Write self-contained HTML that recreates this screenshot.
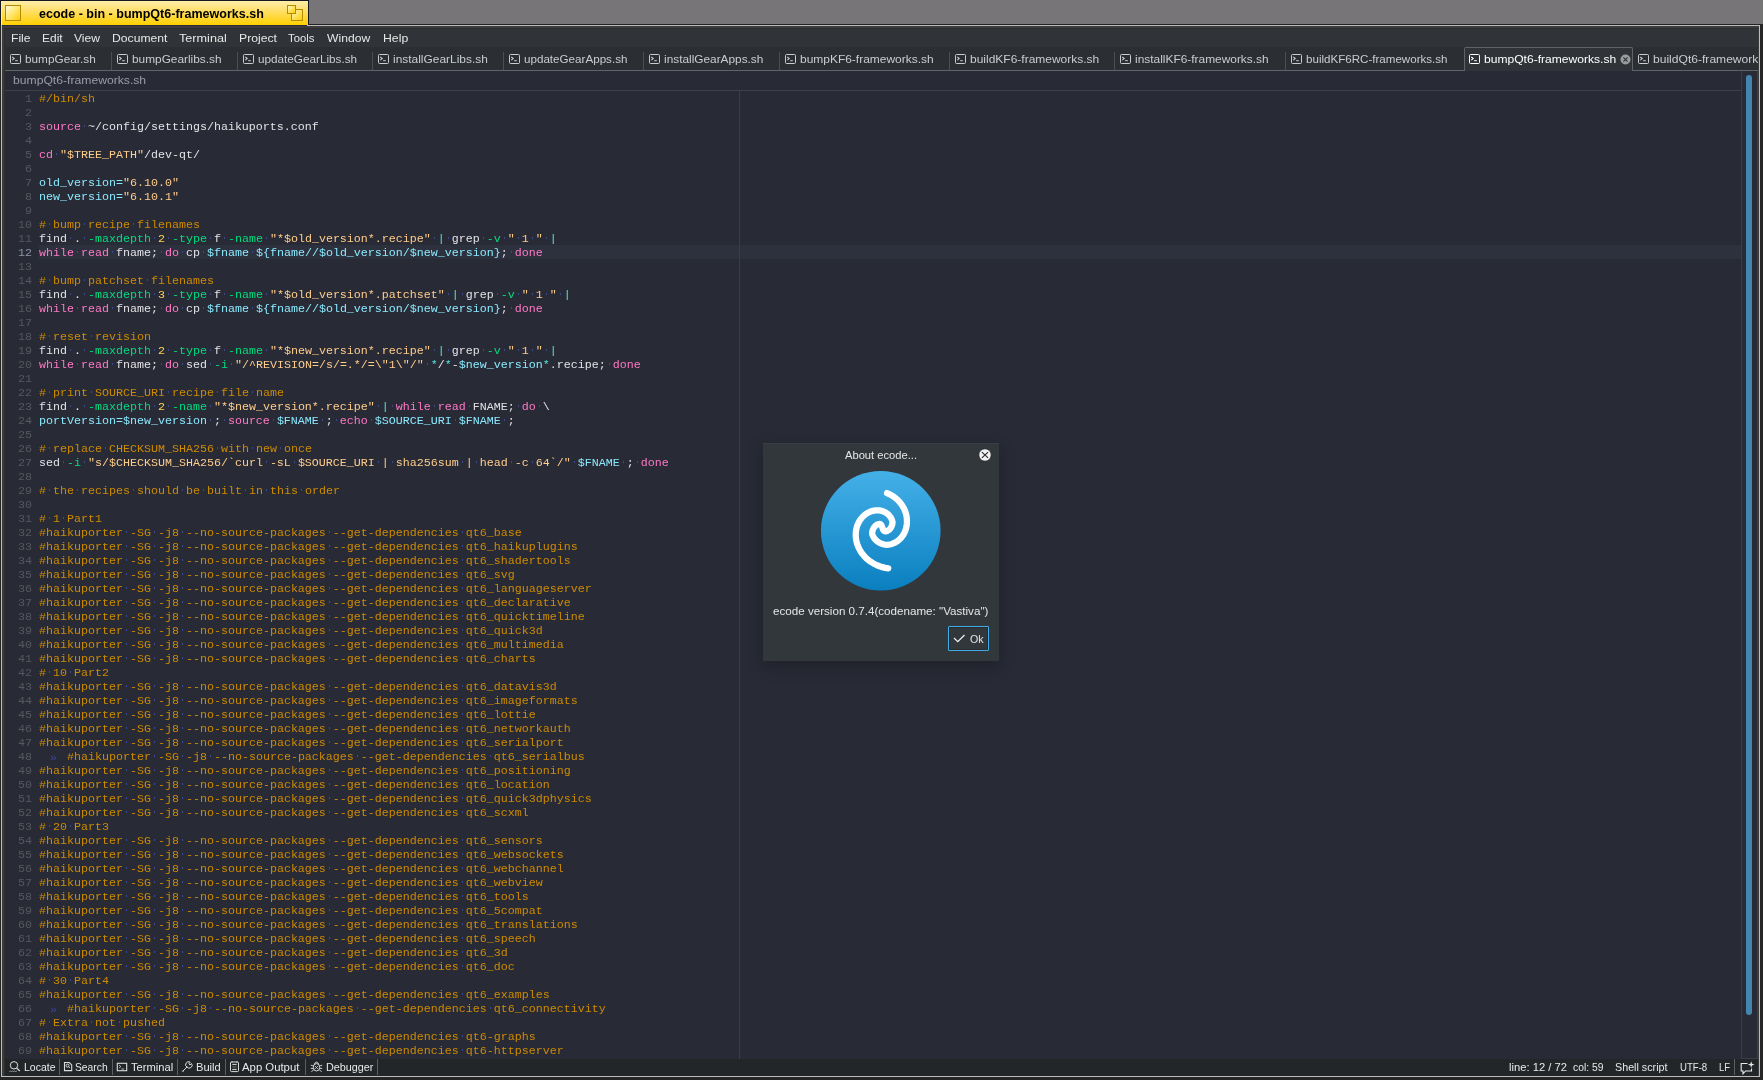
<!DOCTYPE html><html><head><meta charset="utf-8"><style>
*{margin:0;padding:0;box-sizing:border-box}
html,body{width:1763px;height:1080px;overflow:hidden;background:#777578;font-family:"Liberation Sans", sans-serif}
.abs{position:absolute}
.lb{position:absolute;white-space:pre;line-height:1;transform-origin:0 0}
#tabwrap{position:absolute;left:0;top:0;width:1758px;height:1080px;overflow:hidden;pointer-events:none;will-change:transform}
.code{position:absolute;left:5px;top:91px;width:1736px;height:968px;overflow:hidden;will-change:transform}
.ln{position:absolute;left:0;height:14px;width:1736px;font-family:"Liberation Mono", monospace;font-size:11.667px;line-height:16px;white-space:pre;color:#e1e1e6}
.ln u{position:absolute;right:1709px;top:0;text-decoration:none;color:#56585f}
.ln.cur u{color:#8f93a8}
.ln p{position:absolute;left:34px;top:0}
.ln i{font-style:normal;background:linear-gradient(#3b4892,#3b4892) no-repeat 3px 5px/1px 2px}
.ln b.tb{font-weight:normal;position:relative}.ln b.tb s{text-decoration:none;position:absolute;left:11px;top:0;color:#3b4892}
.c{color:#cd8b00}.k{color:#ff79c6}.v{color:#8be9fd}.n{color:#ffd24a}.s{color:#ffcd8b}.f{color:#00dc7f}.p{color:#52e4d9}
</style></head><body><div class="abs" style="left:0;top:0;width:309px;height:25px;background:#15181f"></div><div class="abs" style="left:1px;top:1px;width:307px;height:24px;background:linear-gradient(#ffeeaa,#ffe27a 30%,#ffd000);box-shadow:inset 1px 0 0 #fff3a0"></div><div class="abs" style="left:5px;top:5px;width:16px;height:16px;border:1px solid #b58c00;background:linear-gradient(135deg,#fffbe0,#ffd000)"></div><div class="abs" style="left:291px;top:9px;width:12px;height:12px;border:1px solid #b58c00;background:linear-gradient(135deg,#fff6c0,#ffd000)"></div><div class="abs" style="left:287px;top:5px;width:9px;height:9px;border:1px solid #b58c00;background:linear-gradient(135deg,#fff6c0,#ffd000)"></div><div class="abs" style="left:308px;top:24px;width:1455px;height:1px;background:#222222"></div><div class="abs" style="left:0;top:25px;width:1763px;height:1055px;background:#262626"></div><div class="abs" style="left:1px;top:25px;width:1759px;height:1052px;background:#bcbcbc"></div><div class="abs" style="left:2px;top:26px;width:1757px;height:1050px;background:#3c3c3c"></div><div class="abs" style="left:2px;top:25px;width:305px;height:1px;background:#2a2c3a"></div><div class="abs" style="left:4px;top:28px;width:1754px;height:1048px;background:#2e2e2e"></div><div class="abs" style="left:5px;top:29px;width:1753px;height:18px;background:#303438"></div><div class="abs" style="left:5px;top:47px;width:1753px;height:23px;background:#2b2f33"></div><div class="abs" style="left:5px;top:70px;width:1753px;height:1px;background:#5f6469"></div><div class="abs" style="left:111px;top:52px;width:1px;height:18px;background:#4b4f53"></div><div class="abs" style="left:237px;top:52px;width:1px;height:18px;background:#4b4f53"></div><div class="abs" style="left:372px;top:52px;width:1px;height:18px;background:#4b4f53"></div><div class="abs" style="left:503px;top:52px;width:1px;height:18px;background:#4b4f53"></div><div class="abs" style="left:643px;top:52px;width:1px;height:18px;background:#4b4f53"></div><div class="abs" style="left:779px;top:52px;width:1px;height:18px;background:#4b4f53"></div><div class="abs" style="left:949px;top:52px;width:1px;height:18px;background:#4b4f53"></div><div class="abs" style="left:1114px;top:52px;width:1px;height:18px;background:#4b4f53"></div><div class="abs" style="left:1285px;top:52px;width:1px;height:18px;background:#4b4f53"></div><div class="abs" style="left:1464px;top:47px;width:169px;height:24px;background:#303438;border:1px solid #5f6469;border-bottom:none;border-radius:2px 2px 0 0"></div><svg class="abs" style="left:10px;top:54px" width="11" height="10" viewBox="0 0 11 10"><rect x="0.5" y="0.5" width="10" height="9" rx="1" fill="none" stroke="#c9cdd1" stroke-width="1"/><path d="M2.3 3 L4.2 4.6 L2.3 6.2" fill="none" stroke="#c9cdd1" stroke-width="1.1"/><path d="M5.2 6.7 H7.8" stroke="#c9cdd1" stroke-width="1"/></svg><svg class="abs" style="left:117px;top:54px" width="11" height="10" viewBox="0 0 11 10"><rect x="0.5" y="0.5" width="10" height="9" rx="1" fill="none" stroke="#c9cdd1" stroke-width="1"/><path d="M2.3 3 L4.2 4.6 L2.3 6.2" fill="none" stroke="#c9cdd1" stroke-width="1.1"/><path d="M5.2 6.7 H7.8" stroke="#c9cdd1" stroke-width="1"/></svg><svg class="abs" style="left:243px;top:54px" width="11" height="10" viewBox="0 0 11 10"><rect x="0.5" y="0.5" width="10" height="9" rx="1" fill="none" stroke="#c9cdd1" stroke-width="1"/><path d="M2.3 3 L4.2 4.6 L2.3 6.2" fill="none" stroke="#c9cdd1" stroke-width="1.1"/><path d="M5.2 6.7 H7.8" stroke="#c9cdd1" stroke-width="1"/></svg><svg class="abs" style="left:378px;top:54px" width="11" height="10" viewBox="0 0 11 10"><rect x="0.5" y="0.5" width="10" height="9" rx="1" fill="none" stroke="#c9cdd1" stroke-width="1"/><path d="M2.3 3 L4.2 4.6 L2.3 6.2" fill="none" stroke="#c9cdd1" stroke-width="1.1"/><path d="M5.2 6.7 H7.8" stroke="#c9cdd1" stroke-width="1"/></svg><svg class="abs" style="left:509px;top:54px" width="11" height="10" viewBox="0 0 11 10"><rect x="0.5" y="0.5" width="10" height="9" rx="1" fill="none" stroke="#c9cdd1" stroke-width="1"/><path d="M2.3 3 L4.2 4.6 L2.3 6.2" fill="none" stroke="#c9cdd1" stroke-width="1.1"/><path d="M5.2 6.7 H7.8" stroke="#c9cdd1" stroke-width="1"/></svg><svg class="abs" style="left:649px;top:54px" width="11" height="10" viewBox="0 0 11 10"><rect x="0.5" y="0.5" width="10" height="9" rx="1" fill="none" stroke="#c9cdd1" stroke-width="1"/><path d="M2.3 3 L4.2 4.6 L2.3 6.2" fill="none" stroke="#c9cdd1" stroke-width="1.1"/><path d="M5.2 6.7 H7.8" stroke="#c9cdd1" stroke-width="1"/></svg><svg class="abs" style="left:785px;top:54px" width="11" height="10" viewBox="0 0 11 10"><rect x="0.5" y="0.5" width="10" height="9" rx="1" fill="none" stroke="#c9cdd1" stroke-width="1"/><path d="M2.3 3 L4.2 4.6 L2.3 6.2" fill="none" stroke="#c9cdd1" stroke-width="1.1"/><path d="M5.2 6.7 H7.8" stroke="#c9cdd1" stroke-width="1"/></svg><svg class="abs" style="left:955px;top:54px" width="11" height="10" viewBox="0 0 11 10"><rect x="0.5" y="0.5" width="10" height="9" rx="1" fill="none" stroke="#c9cdd1" stroke-width="1"/><path d="M2.3 3 L4.2 4.6 L2.3 6.2" fill="none" stroke="#c9cdd1" stroke-width="1.1"/><path d="M5.2 6.7 H7.8" stroke="#c9cdd1" stroke-width="1"/></svg><svg class="abs" style="left:1120px;top:54px" width="11" height="10" viewBox="0 0 11 10"><rect x="0.5" y="0.5" width="10" height="9" rx="1" fill="none" stroke="#c9cdd1" stroke-width="1"/><path d="M2.3 3 L4.2 4.6 L2.3 6.2" fill="none" stroke="#c9cdd1" stroke-width="1.1"/><path d="M5.2 6.7 H7.8" stroke="#c9cdd1" stroke-width="1"/></svg><svg class="abs" style="left:1291px;top:54px" width="11" height="10" viewBox="0 0 11 10"><rect x="0.5" y="0.5" width="10" height="9" rx="1" fill="none" stroke="#c9cdd1" stroke-width="1"/><path d="M2.3 3 L4.2 4.6 L2.3 6.2" fill="none" stroke="#c9cdd1" stroke-width="1.1"/><path d="M5.2 6.7 H7.8" stroke="#c9cdd1" stroke-width="1"/></svg><svg class="abs" style="left:1469px;top:54px" width="11" height="10" viewBox="0 0 11 10"><rect x="0.5" y="0.5" width="10" height="9" rx="1" fill="none" stroke="#ffffff" stroke-width="1"/><path d="M2.3 3 L4.2 4.6 L2.3 6.2" fill="none" stroke="#ffffff" stroke-width="1.1"/><path d="M5.2 6.7 H7.8" stroke="#ffffff" stroke-width="1"/></svg><svg class="abs" style="left:1638px;top:54px" width="11" height="10" viewBox="0 0 11 10"><rect x="0.5" y="0.5" width="10" height="9" rx="1" fill="none" stroke="#c9cdd1" stroke-width="1"/><path d="M2.3 3 L4.2 4.6 L2.3 6.2" fill="none" stroke="#c9cdd1" stroke-width="1.1"/><path d="M5.2 6.7 H7.8" stroke="#c9cdd1" stroke-width="1"/></svg><svg class="abs" style="left:1620px;top:54px" width="11" height="11" viewBox="0 0 11 11"><circle cx="5.5" cy="5.5" r="5" fill="#9a9c9e"/><path d="M3.4 3.4 L7.6 7.6 M7.6 3.4 L3.4 7.6" stroke="#2e3236" stroke-width="1.1"/></svg><div class="abs" style="left:5px;top:71px;width:1736px;height:19px;background:#282a36"></div><div class="abs" style="left:5px;top:90px;width:1736px;height:1px;background:#3e414c"></div><div class="abs" style="left:5px;top:91px;width:1736px;height:968px;background:#282a36"></div><div class="abs" style="left:1741px;top:71px;width:17px;height:988px;background:#282a36;border-left:1px solid #3a3c46;border-bottom:1px solid #3a3c46;border-right:1px solid #3a3c46"></div><div class="abs" style="left:1746px;top:75px;width:6px;height:940px;background:#4285ae;border-radius:3px"></div><div class="code"><div style="position:absolute;left:34px;top:154px;width:1702px;height:14px;background:#2d303d"></div><div style="position:absolute;left:734px;top:0;width:1px;height:968px;background:#3a3c48"></div><div class="ln" style="top:0px"><u>1</u><p><span class="c">#/bin/sh</span></p></div><div class="ln" style="top:14px"><u>2</u><p></p></div><div class="ln" style="top:28px"><u>3</u><p><span class="k">source</span><i> </i>~/config/settings/haikuports.conf</p></div><div class="ln" style="top:42px"><u>4</u><p></p></div><div class="ln" style="top:56px"><u>5</u><p><span class="k">cd</span><i> </i><span class="s">&quot;$TREE_PATH&quot;</span>/dev-qt/</p></div><div class="ln" style="top:70px"><u>6</u><p></p></div><div class="ln" style="top:84px"><u>7</u><p><span class="v">old_version=</span><span class="s">&quot;6.10.0&quot;</span></p></div><div class="ln" style="top:98px"><u>8</u><p><span class="v">new_version=</span><span class="s">&quot;6.10.1&quot;</span></p></div><div class="ln" style="top:112px"><u>9</u><p></p></div><div class="ln" style="top:126px"><u>10</u><p><span class="c">#<i> </i>bump<i> </i>recipe<i> </i>filenames</span></p></div><div class="ln" style="top:140px"><u>11</u><p>find<i> </i>.<i> </i><span class="f">-</span><span class="f">maxdepth</span><i> </i><span class="n">2</span><i> </i><span class="f">-</span><span class="f">type</span><i> </i>f<i> </i><span class="f">-</span><span class="f">name</span><i> </i><span class="s">&quot;*$old_version*.recipe&quot;</span><i> </i><span class="p">|</span><i> </i>grep<i> </i><span class="f">-</span><span class="f">v</span><i> </i><span class="s">&quot;<i> </i>1<i> </i>&quot;</span><i> </i><span class="p">|</span></p></div><div class="ln cur" style="top:154px"><u>12</u><p><span class="k">while</span><i> </i><span class="k">read</span><i> </i>fname;<i> </i><span class="k">do</span><i> </i>cp<i> </i><span class="v">$fname</span><i> </i><span class="v">${fname//$old_version/$new_version}</span>;<i> </i><span class="k">done</span></p></div><div class="ln" style="top:168px"><u>13</u><p></p></div><div class="ln" style="top:182px"><u>14</u><p><span class="c">#<i> </i>bump<i> </i>patchset<i> </i>filenames</span></p></div><div class="ln" style="top:196px"><u>15</u><p>find<i> </i>.<i> </i><span class="f">-</span><span class="f">maxdepth</span><i> </i><span class="n">3</span><i> </i><span class="f">-</span><span class="f">type</span><i> </i>f<i> </i><span class="f">-</span><span class="f">name</span><i> </i><span class="s">&quot;*$old_version*.patchset&quot;</span><i> </i><span class="p">|</span><i> </i>grep<i> </i><span class="f">-</span><span class="f">v</span><i> </i><span class="s">&quot;<i> </i>1<i> </i>&quot;</span><i> </i><span class="p">|</span></p></div><div class="ln" style="top:210px"><u>16</u><p><span class="k">while</span><i> </i><span class="k">read</span><i> </i>fname;<i> </i><span class="k">do</span><i> </i>cp<i> </i><span class="v">$fname</span><i> </i><span class="v">${fname//$old_version/$new_version}</span>;<i> </i><span class="k">done</span></p></div><div class="ln" style="top:224px"><u>17</u><p></p></div><div class="ln" style="top:238px"><u>18</u><p><span class="c">#<i> </i>reset<i> </i>revision</span></p></div><div class="ln" style="top:252px"><u>19</u><p>find<i> </i>.<i> </i><span class="f">-</span><span class="f">maxdepth</span><i> </i><span class="n">2</span><i> </i><span class="f">-</span><span class="f">type</span><i> </i>f<i> </i><span class="f">-</span><span class="f">name</span><i> </i><span class="s">&quot;*$new_version*.recipe&quot;</span><i> </i><span class="p">|</span><i> </i>grep<i> </i><span class="f">-</span><span class="f">v</span><i> </i><span class="s">&quot;<i> </i>1<i> </i>&quot;</span><i> </i><span class="p">|</span></p></div><div class="ln" style="top:266px"><u>20</u><p><span class="k">while</span><i> </i><span class="k">read</span><i> </i>fname;<i> </i><span class="k">do</span><i> </i>sed<i> </i><span class="f">-</span><span class="f">i</span><i> </i><span class="s">&quot;/^REVISION=/s/=.*/=\&quot;1\&quot;/&quot;</span><i> </i><span class="p">*</span>/<span class="p">*</span>-<span class="v">$new_version</span><span class="p">*</span>.recipe;<i> </i><span class="k">done</span></p></div><div class="ln" style="top:280px"><u>21</u><p></p></div><div class="ln" style="top:294px"><u>22</u><p><span class="c">#<i> </i>print<i> </i>SOURCE_URI<i> </i>recipe<i> </i>file<i> </i>name</span></p></div><div class="ln" style="top:308px"><u>23</u><p>find<i> </i>.<i> </i><span class="f">-</span><span class="f">maxdepth</span><i> </i><span class="n">2</span><i> </i><span class="f">-</span><span class="f">name</span><i> </i><span class="s">&quot;*$new_version*.recipe&quot;</span><i> </i><span class="p">|</span><i> </i><span class="k">while</span><i> </i><span class="k">read</span><i> </i>FNAME;<i> </i><span class="k">do</span><i> </i>\</p></div><div class="ln" style="top:322px"><u>24</u><p><span class="v">portVersion=$new_version</span><i> </i>;<i> </i><span class="k">source</span><i> </i><span class="v">$FNAME</span><i> </i>;<i> </i><span class="k">echo</span><i> </i><span class="v">$SOURCE_URI</span><i> </i><span class="v">$FNAME</span><i> </i>;</p></div><div class="ln" style="top:336px"><u>25</u><p></p></div><div class="ln" style="top:350px"><u>26</u><p><span class="c">#<i> </i>replace<i> </i>CHECKSUM_SHA256<i> </i>with<i> </i>new<i> </i>once</span></p></div><div class="ln" style="top:364px"><u>27</u><p>sed<i> </i><span class="f">-</span><span class="f">i</span><i> </i><span class="s">&quot;s/$CHECKSUM_SHA256/`curl<i> </i>-sL<i> </i>$SOURCE_URI<i> </i>|<i> </i>sha256sum<i> </i>|<i> </i>head<i> </i>-c<i> </i>64`/&quot;</span><i> </i><span class="v">$FNAME</span><i> </i>;<i> </i><span class="k">done</span></p></div><div class="ln" style="top:378px"><u>28</u><p></p></div><div class="ln" style="top:392px"><u>29</u><p><span class="c">#<i> </i>the<i> </i>recipes<i> </i>should<i> </i>be<i> </i>built<i> </i>in<i> </i>this<i> </i>order</span></p></div><div class="ln" style="top:406px"><u>30</u><p></p></div><div class="ln" style="top:420px"><u>31</u><p><span class="c">#<i> </i>1<i> </i>Part1</span></p></div><div class="ln" style="top:434px"><u>32</u><p><span class="c">#haikuporter<i> </i>-SG<i> </i>-j8<i> </i>--no-source-packages<i> </i>--get-dependencies<i> </i>qt6_base</span></p></div><div class="ln" style="top:448px"><u>33</u><p><span class="c">#haikuporter<i> </i>-SG<i> </i>-j8<i> </i>--no-source-packages<i> </i>--get-dependencies<i> </i>qt6_haikuplugins</span></p></div><div class="ln" style="top:462px"><u>34</u><p><span class="c">#haikuporter<i> </i>-SG<i> </i>-j8<i> </i>--no-source-packages<i> </i>--get-dependencies<i> </i>qt6_shadertools</span></p></div><div class="ln" style="top:476px"><u>35</u><p><span class="c">#haikuporter<i> </i>-SG<i> </i>-j8<i> </i>--no-source-packages<i> </i>--get-dependencies<i> </i>qt6_svg</span></p></div><div class="ln" style="top:490px"><u>36</u><p><span class="c">#haikuporter<i> </i>-SG<i> </i>-j8<i> </i>--no-source-packages<i> </i>--get-dependencies<i> </i>qt6_languageserver</span></p></div><div class="ln" style="top:504px"><u>37</u><p><span class="c">#haikuporter<i> </i>-SG<i> </i>-j8<i> </i>--no-source-packages<i> </i>--get-dependencies<i> </i>qt6_declarative</span></p></div><div class="ln" style="top:518px"><u>38</u><p><span class="c">#haikuporter<i> </i>-SG<i> </i>-j8<i> </i>--no-source-packages<i> </i>--get-dependencies<i> </i>qt6_quicktimeline</span></p></div><div class="ln" style="top:532px"><u>39</u><p><span class="c">#haikuporter<i> </i>-SG<i> </i>-j8<i> </i>--no-source-packages<i> </i>--get-dependencies<i> </i>qt6_quick3d</span></p></div><div class="ln" style="top:546px"><u>40</u><p><span class="c">#haikuporter<i> </i>-SG<i> </i>-j8<i> </i>--no-source-packages<i> </i>--get-dependencies<i> </i>qt6_multimedia</span></p></div><div class="ln" style="top:560px"><u>41</u><p><span class="c">#haikuporter<i> </i>-SG<i> </i>-j8<i> </i>--no-source-packages<i> </i>--get-dependencies<i> </i>qt6_charts</span></p></div><div class="ln" style="top:574px"><u>42</u><p><span class="c">#<i> </i>10<i> </i>Part2</span></p></div><div class="ln" style="top:588px"><u>43</u><p><span class="c">#haikuporter<i> </i>-SG<i> </i>-j8<i> </i>--no-source-packages<i> </i>--get-dependencies<i> </i>qt6_datavis3d</span></p></div><div class="ln" style="top:602px"><u>44</u><p><span class="c">#haikuporter<i> </i>-SG<i> </i>-j8<i> </i>--no-source-packages<i> </i>--get-dependencies<i> </i>qt6_imageformats</span></p></div><div class="ln" style="top:616px"><u>45</u><p><span class="c">#haikuporter<i> </i>-SG<i> </i>-j8<i> </i>--no-source-packages<i> </i>--get-dependencies<i> </i>qt6_lottie</span></p></div><div class="ln" style="top:630px"><u>46</u><p><span class="c">#haikuporter<i> </i>-SG<i> </i>-j8<i> </i>--no-source-packages<i> </i>--get-dependencies<i> </i>qt6_networkauth</span></p></div><div class="ln" style="top:644px"><u>47</u><p><span class="c">#haikuporter<i> </i>-SG<i> </i>-j8<i> </i>--no-source-packages<i> </i>--get-dependencies<i> </i>qt6_serialport</span></p></div><div class="ln" style="top:658px"><u>48</u><p><b class="tb">    <s>»</s></b><span class="c">#haikuporter<i> </i>-SG<i> </i>-j8<i> </i>--no-source-packages<i> </i>--get-dependencies<i> </i>qt6_serialbus</span></p></div><div class="ln" style="top:672px"><u>49</u><p><span class="c">#haikuporter<i> </i>-SG<i> </i>-j8<i> </i>--no-source-packages<i> </i>--get-dependencies<i> </i>qt6_positioning</span></p></div><div class="ln" style="top:686px"><u>50</u><p><span class="c">#haikuporter<i> </i>-SG<i> </i>-j8<i> </i>--no-source-packages<i> </i>--get-dependencies<i> </i>qt6_location</span></p></div><div class="ln" style="top:700px"><u>51</u><p><span class="c">#haikuporter<i> </i>-SG<i> </i>-j8<i> </i>--no-source-packages<i> </i>--get-dependencies<i> </i>qt6_quick3dphysics</span></p></div><div class="ln" style="top:714px"><u>52</u><p><span class="c">#haikuporter<i> </i>-SG<i> </i>-j8<i> </i>--no-source-packages<i> </i>--get-dependencies<i> </i>qt6_scxml</span></p></div><div class="ln" style="top:728px"><u>53</u><p><span class="c">#<i> </i>20<i> </i>Part3</span></p></div><div class="ln" style="top:742px"><u>54</u><p><span class="c">#haikuporter<i> </i>-SG<i> </i>-j8<i> </i>--no-source-packages<i> </i>--get-dependencies<i> </i>qt6_sensors</span></p></div><div class="ln" style="top:756px"><u>55</u><p><span class="c">#haikuporter<i> </i>-SG<i> </i>-j8<i> </i>--no-source-packages<i> </i>--get-dependencies<i> </i>qt6_websockets</span></p></div><div class="ln" style="top:770px"><u>56</u><p><span class="c">#haikuporter<i> </i>-SG<i> </i>-j8<i> </i>--no-source-packages<i> </i>--get-dependencies<i> </i>qt6_webchannel</span></p></div><div class="ln" style="top:784px"><u>57</u><p><span class="c">#haikuporter<i> </i>-SG<i> </i>-j8<i> </i>--no-source-packages<i> </i>--get-dependencies<i> </i>qt6_webview</span></p></div><div class="ln" style="top:798px"><u>58</u><p><span class="c">#haikuporter<i> </i>-SG<i> </i>-j8<i> </i>--no-source-packages<i> </i>--get-dependencies<i> </i>qt6_tools</span></p></div><div class="ln" style="top:812px"><u>59</u><p><span class="c">#haikuporter<i> </i>-SG<i> </i>-j8<i> </i>--no-source-packages<i> </i>--get-dependencies<i> </i>qt6_5compat</span></p></div><div class="ln" style="top:826px"><u>60</u><p><span class="c">#haikuporter<i> </i>-SG<i> </i>-j8<i> </i>--no-source-packages<i> </i>--get-dependencies<i> </i>qt6_translations</span></p></div><div class="ln" style="top:840px"><u>61</u><p><span class="c">#haikuporter<i> </i>-SG<i> </i>-j8<i> </i>--no-source-packages<i> </i>--get-dependencies<i> </i>qt6_speech</span></p></div><div class="ln" style="top:854px"><u>62</u><p><span class="c">#haikuporter<i> </i>-SG<i> </i>-j8<i> </i>--no-source-packages<i> </i>--get-dependencies<i> </i>qt6_3d</span></p></div><div class="ln" style="top:868px"><u>63</u><p><span class="c">#haikuporter<i> </i>-SG<i> </i>-j8<i> </i>--no-source-packages<i> </i>--get-dependencies<i> </i>qt6_doc</span></p></div><div class="ln" style="top:882px"><u>64</u><p><span class="c">#<i> </i>30<i> </i>Part4</span></p></div><div class="ln" style="top:896px"><u>65</u><p><span class="c">#haikuporter<i> </i>-SG<i> </i>-j8<i> </i>--no-source-packages<i> </i>--get-dependencies<i> </i>qt6_examples</span></p></div><div class="ln" style="top:910px"><u>66</u><p><b class="tb">    <s>»</s></b><span class="c">#haikuporter<i> </i>-SG<i> </i>-j8<i> </i>--no-source-packages<i> </i>--get-dependencies<i> </i>qt6_connectivity</span></p></div><div class="ln" style="top:924px"><u>67</u><p><span class="c">#<i> </i>Extra<i> </i>not<i> </i>pushed</span></p></div><div class="ln" style="top:938px"><u>68</u><p><span class="c">#haikuporter<i> </i>-SG<i> </i>-j8<i> </i>--no-source-packages<i> </i>--get-dependencies<i> </i>qt6-graphs</span></p></div><div class="ln" style="top:952px"><u>69</u><p><span class="c">#haikuporter<i> </i>-SG<i> </i>-j8<i> </i>--no-source-packages<i> </i>--get-dependencies<i> </i>qt6-httpserver</span></p></div></div><div class="abs" style="left:5px;top:1059px;width:1753px;height:17px;background:#222629"></div><div class="abs" style="left:59px;top:1059px;width:1px;height:16px;background:#5a5e62"></div><div class="abs" style="left:112px;top:1059px;width:1px;height:16px;background:#5a5e62"></div><div class="abs" style="left:177px;top:1059px;width:1px;height:16px;background:#5a5e62"></div><div class="abs" style="left:225px;top:1059px;width:1px;height:16px;background:#5a5e62"></div><div class="abs" style="left:305px;top:1059px;width:1px;height:16px;background:#5a5e62"></div><div class="abs" style="left:377px;top:1059px;width:1px;height:16px;background:#5a5e62"></div><div class="abs" style="left:1734px;top:1059px;width:1px;height:16px;background:#5a5e62"></div><div class="abs" style="left:763px;top:443px;width:236px;height:218px;background:#32373b;border-top:1px solid #393e42;box-shadow:0 5px 14px 2px rgba(0,0,0,0.2)"></div><svg class="abs" style="left:816px;top:466px" width="130" height="130" viewBox="0 0 1080 1080">
<defs><linearGradient id="lg" x1="0" y1="0" x2="0" y2="1"><stop offset="0" stop-color="#44b0e8"/><stop offset="1" stop-color="#0a7fbf"/></linearGradient></defs>
<circle cx="538" cy="538" r="497" fill="url(#lg)"/>
<path d="M590.1 224.8 L608.1 233.0 L625.1 242.1 L641.3 252.3 L656.5 263.3 L670.6 275.0 L683.7 287.5 L695.8 300.6 L706.7 314.3 L716.5 328.4 L725.3 342.8 L732.9 357.6 L739.3 372.6 L744.7 387.7 L749.0 402.8 L752.2 418.0 L754.3 433.1 L755.4 448.0 L755.5 462.7 L754.9 477.1 L753.6 491.1 L751.3 504.9 L748.3 518.2 L744.4 531.2 L739.7 543.6 L734.2 555.5 L728.1 566.9 L721.3 577.7 L714.0 587.8 L706.1 597.3 L697.7 606.1 L688.8 614.2 L679.6 621.6 L670.0 628.3 L660.2 634.2 L650.2 639.3 L639.9 643.7 L629.6 647.4 L619.2 650.3 L608.8 652.5 L598.4 653.9 L588.0 654.5 L577.7 653.6 L567.6 651.9 L557.9 649.7 L548.6 646.9 L539.7 643.5 L531.2 639.6 L523.1 635.3 L515.6 630.6 L508.5 625.4 L501.9 620.0 L495.9 614.2 L490.4 608.2 L485.4 601.9 L480.9 595.5 L477.0 588.9 L473.5 582.2 L470.6 575.5 L468.3 568.8 L466.4 562.0 L466.5 554.4 L467.7 547.0 L469.2 540.0 L471.1 533.4 L473.4 527.3 L475.9 521.5 L478.7 516.3 L481.7 511.4 L484.8 507.0 L488.1 503.0 L491.5 499.4 L495.0 496.1 L498.5 493.3 L502.0 490.8 L505.5 488.6 L509.0 486.8 L512.4 485.3 L515.8 484.1 L519.1 483.1 C562.3 470.6 541.7 556.2 584.4 542.1 L588.1 540.8 L592.0 539.2 L595.8 537.3 L599.7 535.0 L603.5 532.3 L607.4 529.3 L611.1 525.8 L614.7 521.9 L618.2 517.6 L621.5 512.9 L624.7 507.7 L627.5 502.1 L630.0 496.0 L632.2 489.6 L634.0 482.7 L635.4 475.3 L635.8 467.8 L634.5 460.8 L632.6 453.7 L630.2 446.5 L627.2 439.5 L623.6 432.4 L619.4 425.6 L614.7 418.8 L609.4 412.3 L603.5 406.0 L597.0 400.1 L590.0 394.5 L582.4 389.3 L574.3 384.5 L565.7 380.2 L556.6 376.5 L547.0 373.3 L537.0 370.8 L526.7 369.0 L516.0 368.0 L505.1 368.0 L494.1 368.8 L482.9 370.3 L471.6 372.8 L460.3 376.1 L449.1 380.2 L437.9 385.3 L427.0 391.2 L416.2 398.1 L405.8 405.8 L395.8 414.4 L386.2 423.9 L377.1 434.3 L368.6 445.5 L360.8 457.5 L353.7 470.3 L347.4 483.8 L342.0 498.0 L337.5 512.8 L334.1 528.2 L331.6 544.2 L330.3 560.6 L330.1 577.4 L331.1 594.5 L333.3 611.8 L336.8 629.3 L341.7 646.9 L347.9 664.4 L355.5 681.8 L364.5 698.9 L374.8 715.7 L386.6 732.0 L399.8 747.8 L414.3 762.9 L430.2 777.2 L447.4 790.6 L465.9 803.0 L485.6 814.3 L506.5 824.4 L528.5 833.1 L551.5 840.4 L575.5 846.2 L600.3 850.3" fill="none" stroke="#fff" stroke-width="52" stroke-linecap="round" stroke-linejoin="round"/>
</svg><svg class="abs" style="left:978px;top:448px" width="14" height="14" viewBox="0 0 14 14"><circle cx="7" cy="7" r="6.2" fill="#f2f2f2" stroke="#1f2225" stroke-width="0.8"/><path d="M3.9 4.1 L10.1 9.9 M10.1 4.1 L3.9 9.9" stroke="#2a2e31" stroke-width="1.2"/></svg><div class="abs" style="left:948px;top:626px;width:41px;height:25px;border:1px solid #3daee9;border-radius:1px;box-shadow:inset 0 0 0 1px #2b2929"></div><svg class="abs" style="left:952px;top:632px" width="14" height="12" viewBox="0 0 14 12"><path d="M2 6 L5.8 9.6 L12.5 3" fill="none" stroke="#eeeeee" stroke-width="1.3"/></svg><svg class="abs" style="left:8px;top:1060px" width="14" height="14" viewBox="0 0 14 14"><circle cx="6" cy="5.3" r="3.7" fill="none" stroke="#dcdcdc" stroke-width="1"/><path d="M8.6 8 L11.8 11" stroke="#dcdcdc" stroke-width="1.1"/><path d="M1.5 11.5 Q2.5 10.6 3.5 11.5 Q4.5 10.6 5.5 11.5 Q6.5 10.6 7.5 11.5 Q8.3 10.8 9 11.3" fill="none" stroke="#aaa" stroke-width="0.9"/></svg><svg class="abs" style="left:63px;top:1061px" width="10" height="11" viewBox="0 0 10 11"><path d="M1.5 1.5 H6.3 L8.7 3.9 V9.6 H1.5 Z" fill="none" stroke="#dcdcdc" stroke-width="1.1"/><circle cx="4.5" cy="4.6" r="1.5" fill="none" stroke="#dcdcdc" stroke-width="1"/><path d="M5.6 5.8 L6.8 7" stroke="#dcdcdc" stroke-width="1"/></svg><svg class="abs" style="left:116px;top:1062px" width="12" height="10" viewBox="0 0 12 10"><rect x="1.3" y="1.3" width="9.4" height="7.4" fill="none" stroke="#dcdcdc" stroke-width="1.1"/><path d="M3.2 3.2 L4.8 4.6 L3.2 6" fill="none" stroke="#dcdcdc" stroke-width="0.9"/><path d="M5.5 7 H8" stroke="#dcdcdc" stroke-width="0.9"/></svg><svg class="abs" style="left:181px;top:1061px" width="12" height="12" viewBox="0 0 12 12"><path d="M1.6 10.4 L6.2 5.8 M1.2 9.6 L2.4 10.8 M6 6.2 A2.8 2.8 0 0 1 9.2 1.2 L7.8 2.8 L8.9 3.9 L10.6 2.6 A2.8 2.8 0 0 1 5.9 5.9" fill="none" stroke="#dcdcdc" stroke-width="1"/></svg><svg class="abs" style="left:229px;top:1060px" width="11" height="13" viewBox="0 0 11 13"><rect x="1.5" y="2" width="8" height="9.6" rx="1" fill="none" stroke="#dcdcdc" stroke-width="1"/><path d="M3 1 V2.5 M8 1 V2.5" stroke="#dcdcdc" stroke-width="0.9"/><path d="M3.3 4.4 H7.7 M3.3 9.4 H7.7" stroke="#dcdcdc" stroke-width="1"/><path d="M3.3 6.9 H7.7" stroke="#777" stroke-width="1"/></svg><svg class="abs" style="left:310px;top:1060px" width="13" height="13" viewBox="0 0 13 13"><path d="M4.2 3.6 Q6.5 0.6 8.8 3.6" fill="none" stroke="#dcdcdc" stroke-width="1"/><ellipse cx="6.5" cy="7.3" rx="3.2" ry="3.7" fill="none" stroke="#dcdcdc" stroke-width="1"/><path d="M0.8 5.2 L3.4 6 M12.2 5.2 L9.6 6 M0.8 8.4 H3.2 M12.2 8.4 H9.8 M1.4 11.6 L3.6 10 M11.6 11.6 L9.4 10 M5.2 6.2 L7.8 8.8 M7.8 6.2 L5.2 8.8" fill="none" stroke="#dcdcdc" stroke-width="0.9"/></svg><svg class="abs" style="left:1740px;top:1061px" width="15" height="14" viewBox="0 0 15 14"><path d="M7.5 2.5 H1.2 V10 H3 V12.8 L5.6 10 H11.5 V7.5" fill="none" stroke="#e8e8e8" stroke-width="1.1"/><path d="M11.2 0.3 L12 2.8 L14.5 3.6 L12 4.4 L11.2 6.9 L10.4 4.4 L7.9 3.6 L10.4 2.8 Z" fill="#e8e8e8"/></svg><div id="tabwrap"><span id="t_title" class="lb" style="left:38.80px;top:6.87px;font-size:13.50px;color:#000;font-weight:700;transform:scaleX(0.9281)">ecode - bin - bumpQt6-frameworks.sh</span><span id="m0" class="lb" style="left:11.00px;top:32.18px;font-size:11.60px;color:#e6e6e6;font-weight:400;transform:scaleX(1.0471)">File</span><span id="m1" class="lb" style="left:41.70px;top:32.18px;font-size:11.60px;color:#e6e6e6;font-weight:400;transform:scaleX(1.0316)">Edit</span><span id="m2" class="lb" style="left:73.50px;top:32.18px;font-size:11.60px;color:#e6e6e6;font-weight:400;transform:scaleX(1.0400)">View</span><span id="m3" class="lb" style="left:111.90px;top:32.18px;font-size:11.60px;color:#e6e6e6;font-weight:400;transform:scaleX(1.0500)">Document</span><span id="m4" class="lb" style="left:179.20px;top:32.18px;font-size:11.60px;color:#e6e6e6;font-weight:400;transform:scaleX(1.0907)">Terminal</span><span id="m5" class="lb" style="left:238.50px;top:32.18px;font-size:11.60px;color:#e6e6e6;font-weight:400;transform:scaleX(1.0514)">Project</span><span id="m6" class="lb" style="left:288.20px;top:32.18px;font-size:11.60px;color:#e6e6e6;font-weight:400;transform:scaleX(0.9741)">Tools</span><span id="m7" class="lb" style="left:327.20px;top:32.18px;font-size:11.60px;color:#e6e6e6;font-weight:400;transform:scaleX(1.0463)">Window</span><span id="m8" class="lb" style="left:382.50px;top:32.18px;font-size:11.60px;color:#e6e6e6;font-weight:400;transform:scaleX(1.0565)">Help</span><span id="tab0" class="lb" style="left:24.70px;top:53.18px;font-size:11.60px;color:#c9cdd1;font-weight:400;transform:scaleX(1.0162)">bumpGear.sh</span><span id="tab1" class="lb" style="left:132.10px;top:53.18px;font-size:11.60px;color:#c9cdd1;font-weight:400;transform:scaleX(1.0221)">bumpGearlibs.sh</span><span id="tab2" class="lb" style="left:258.00px;top:53.18px;font-size:11.60px;color:#c9cdd1;font-weight:400;transform:scaleX(1.0115)">updateGearLibs.sh</span><span id="tab3" class="lb" style="left:392.50px;top:53.18px;font-size:11.60px;color:#c9cdd1;font-weight:400;transform:scaleX(1.0286)">installGearLibs.sh</span><span id="tab4" class="lb" style="left:523.50px;top:53.18px;font-size:11.60px;color:#c9cdd1;font-weight:400;transform:scaleX(1.0029)">updateGearApps.sh</span><span id="tab5" class="lb" style="left:664.00px;top:53.18px;font-size:11.60px;color:#c9cdd1;font-weight:400;transform:scaleX(1.0208)">installGearApps.sh</span><span id="tab6" class="lb" style="left:800.10px;top:53.18px;font-size:11.60px;color:#c9cdd1;font-weight:400;transform:scaleX(1.0320)">bumpKF6-frameworks.sh</span><span id="tab7" class="lb" style="left:969.70px;top:53.18px;font-size:11.60px;color:#c9cdd1;font-weight:400;transform:scaleX(1.0341)">buildKF6-frameworks.sh</span><span id="tab8" class="lb" style="left:1135.10px;top:53.18px;font-size:11.60px;color:#c9cdd1;font-weight:400;transform:scaleX(1.0271)">installKF6-frameworks.sh</span><span id="tab9" class="lb" style="left:1306.00px;top:53.18px;font-size:11.60px;color:#c9cdd1;font-weight:400;transform:scaleX(0.9986)">buildKF6RC-frameworks.sh</span><span id="tab10" class="lb" style="left:1484.30px;top:53.18px;font-size:11.60px;color:#ffffff;font-weight:400;transform:scaleX(1.0416)">bumpQt6-frameworks.sh</span><span id="tab11" class="lb" style="left:1653.00px;top:53.18px;font-size:11.60px;color:#c9cdd1;font-weight:400;transform:scaleX(1.0416)">buildQt6-frameworks.sh</span><span id="crumb" class="lb" style="left:13.00px;top:74.18px;font-size:11.60px;color:#9a9ca6;font-weight:400;transform:scaleX(1.0488)">bumpQt6-frameworks.sh</span><span id="s0" class="lb" style="left:23.90px;top:1061.81px;font-size:11.80px;color:#e8e8e8;font-weight:400;transform:scaleX(0.8882)">Locate</span><span id="s1" class="lb" style="left:75.10px;top:1061.81px;font-size:11.80px;color:#e8e8e8;font-weight:400;transform:scaleX(0.8722)">Search</span><span id="s2" class="lb" style="left:130.50px;top:1061.81px;font-size:11.80px;color:#e8e8e8;font-weight:400;transform:scaleX(0.9455)">Terminal</span><span id="s3" class="lb" style="left:195.90px;top:1061.81px;font-size:11.80px;color:#e8e8e8;font-weight:400;transform:scaleX(0.9440)">Build</span><span id="s4" class="lb" style="left:242.40px;top:1061.81px;font-size:11.80px;color:#e8e8e8;font-weight:400;transform:scaleX(0.9617)">App Output</span><span id="s5" class="lb" style="left:325.70px;top:1061.81px;font-size:11.80px;color:#e8e8e8;font-weight:400;transform:scaleX(0.9157)">Debugger</span><span id="s6" class="lb" style="left:1508.90px;top:1061.81px;font-size:11.80px;color:#e8e8e8;font-weight:400;transform:scaleX(0.9500)">line: 12 / 72</span><span id="s7" class="lb" style="left:1573.10px;top:1061.81px;font-size:11.80px;color:#e8e8e8;font-weight:400;transform:scaleX(0.8735)">col: 59</span><span id="s8" class="lb" style="left:1615.10px;top:1061.81px;font-size:11.80px;color:#e8e8e8;font-weight:400;transform:scaleX(0.9105)">Shell script</span><span id="s9" class="lb" style="left:1679.80px;top:1061.81px;font-size:11.80px;color:#e8e8e8;font-weight:400;transform:scaleX(0.8125)">UTF-8</span><span id="s10" class="lb" style="left:1718.70px;top:1061.81px;font-size:11.80px;color:#e8e8e8;font-weight:400;transform:scaleX(0.8000)">LF</span><span id="d_title" class="lb" style="left:844.50px;top:449.38px;font-size:11.60px;color:#e6e6e6;font-weight:400;transform:scaleX(0.9628)">About ecode...</span><span id="d_ver" class="lb" style="left:773.00px;top:605.18px;font-size:11.60px;color:#e6e6e6;font-weight:400;transform:scaleX(1.0023)">ecode version 0.7.4(codename: &quot;Vastiva&quot;)</span><span id="d_ok" class="lb" style="left:969.70px;top:633.18px;font-size:11.60px;color:#e6e6e6;font-weight:400;transform:scaleX(0.9200)">Ok</span></div></body></html>
